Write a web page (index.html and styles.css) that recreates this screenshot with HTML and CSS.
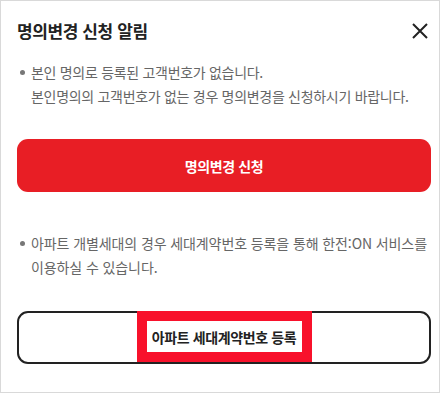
FILE: index.html
```html
<!DOCTYPE html>
<html lang="ko">
<head>
<meta charset="utf-8">
<link rel="stylesheet" href="styles.css">
</head>
<body>
<div class="modal">
  <div class="header">
    <h1 class="title">명의변경 신청 알림</h1>
    <button class="close" aria-label="닫기">
      <svg width="16" height="16" viewBox="0 0 16 16"><path d="M1 1 L15 15 M15 1 L1 15" stroke="#222" stroke-width="2" fill="none"/></svg>
    </button>
  </div>
  <ul class="notes">
    <li>본인 명의로 등록된 고객번호가 없습니다.<br>본인명의의 고객번호가 없는 경우 명의변경을 신청하시기 바랍니다.</li>
  </ul>
  <button class="btn btn-red">명의변경 신청</button>
  <ul class="notes notes2">
    <li>아파트 개별세대의 경우 세대계약번호 등록을 통해 한전:ON 서비스를<br>이용하실 수 있습니다.</li>
  </ul>
  <button class="btn btn-outline"><span class="mark">아파트 세대계약번호 등록</span></button>
</div>
</body>
</html>
```
FILE: styles.css
```css
html, body {
  margin: 0;
  padding: 0;
  background: #fff;
}
body {
  font-family: "Noto Sans CJK KR", "Noto Sans", sans-serif;
}
.modal {
  box-sizing: border-box;
  width: 440px;
  height: 393px;
  border: 1px solid #d9d9d9;
  padding: 0 8px 0 16px;
}
.header {
  display: flex;
  justify-content: space-between;
  align-items: center;
  height: 59px;
}
.title {
  margin: 0;
  font-size: 17px;
  font-weight: 700;
  color: #222;
  letter-spacing: -0.4px;
}
.close {
  border: 0;
  background: none;
  padding: 0;
  width: 16px;
  height: 16px;
  margin-right: 3px;
  display: flex;
}
.notes {
  list-style: none;
  margin: 0;
  padding: 0 0 0 14px;
  font-size: 14px;
  line-height: 24px;
  color: #666;
  letter-spacing: -0.3px;
  white-space: nowrap;
}
.notes li {
  position: relative;
}
.notes li::before {
  content: "";
  position: absolute;
  left: -11px;
  top: 10px;
  width: 5px;
  height: 5px;
  border-radius: 50%;
  background: #777;
}
.btn {
  display: flex;
  align-items: center;
  justify-content: center;
  box-sizing: border-box;
  width: 414px;
  height: 53px;
  border-radius: 11px;
  font-family: inherit;
  font-size: 14px;
  font-weight: 700;
  letter-spacing: -0.4px;
  padding: 0;
}
.btn-red {
  margin-top: 31px;
  background: #e81e25;
  color: #fff;
  border: 0;
}
.notes2 {
  margin-top: 39px;
  letter-spacing: -0.1px;
}
.btn-outline {
  margin-top: 32px;
  background: #fff;
  border: 2px solid #222;
  color: #222;
}
.mark {
  display: inline-flex;
  align-items: center;
  justify-content: center;
  box-sizing: border-box;
  width: 175px;
  height: 51px;
  border: 10px solid #f8112b;
  background: #fff;
  margin-top: -2px;
}
```
